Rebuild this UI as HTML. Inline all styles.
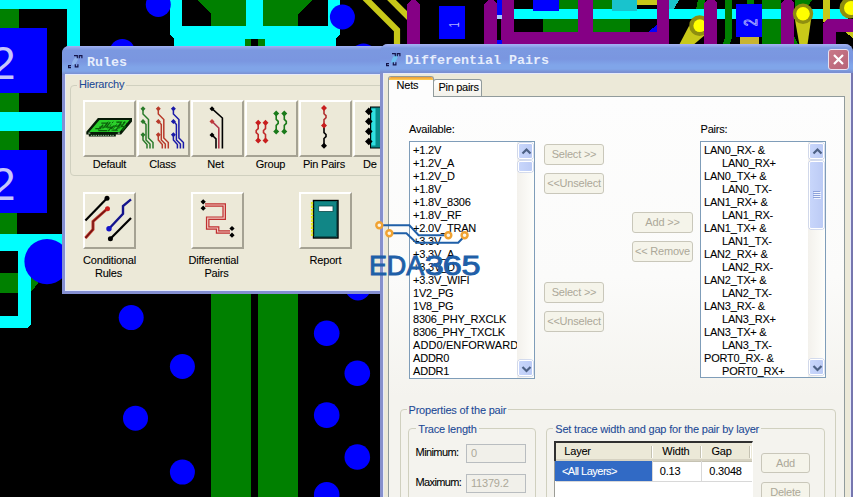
<!DOCTYPE html>
<html><head><meta charset="utf-8">
<style>
*{box-sizing:border-box;margin:0;padding:0}
html,body{width:853px;height:497px;overflow:hidden;background:#000}
body{position:relative;font-family:"Liberation Sans",sans-serif;font-size:11px;color:#000;letter-spacing:-0.2px;-webkit-text-stroke:.08px}
.abs{position:absolute}
#bg{position:absolute;left:0;top:0}
.win{position:absolute;background:#ece9d8}
.title{position:absolute;left:0;top:0;right:0;font-family:"Liberation Mono",monospace;font-weight:bold;font-size:13.33px;color:#e6edfc;white-space:pre;letter-spacing:0;-webkit-text-stroke:0}
.t{position:absolute;white-space:pre;line-height:13px}
.blue{color:#1d4a96}
.c{text-align:center}
.gb{position:absolute;border:1px solid #d0d0bf;border-radius:4px}
.btn3{position:absolute;width:53px;height:57px;background:#ece9d8;border-style:solid;border-width:2px;border-color:#fff #a5a293 #a5a293 #fff}
.lb{position:absolute;background:#fff;border:1px solid #7f9db9;overflow:hidden}
.li{position:absolute;left:4px;white-space:pre;line-height:13px}
.dbtn{position:absolute;height:21px;border:1px solid #c9c7ba;border-radius:3px;background:#f5f4ea;color:#aca899;text-align:center;line-height:19px;white-space:pre;-webkit-text-stroke:0}
.sb{position:absolute;width:17px;background:linear-gradient(to right,#f3f1ec,#fefefb)}
.sbb{position:absolute;width:15px;height:16px;border:1px solid #fff;border-radius:2px;background:linear-gradient(to right,#c8d6fb,#bccbf5);box-shadow:0 0 0 .5px #b0bfe8}
.inp{position:absolute;width:60px;height:19px;border:1px solid #b9bdc0;background:#f1f0ea;color:#aca899;padding-left:4px;line-height:17px;-webkit-text-stroke:0}
</style></head><body>
<svg id="bg" width="853" height="497" viewBox="0 0 853 497" shape-rendering="crispEdges">
<rect width="853" height="497" fill="#000"/>
<!-- left column -->
<g fill="#00ffff">
<rect x="0" y="0" width="80" height="9"/>
<rect x="67" y="0" width="13" height="50"/>
<rect x="0" y="112" width="66" height="19"/>
<rect x="0" y="234" width="66" height="17"/>
<polygon points="18,234 31,234 31,324 27,328 0,328 0,316 18,316"/>
</g>
<g fill="#008000">
<rect x="0" y="9" width="19" height="19"/>
<rect x="0" y="93" width="19" height="19"/>
<rect x="0" y="131" width="19" height="19"/>
<rect x="0" y="213" width="17" height="21"/>
<rect x="0" y="273" width="18" height="20"/>
<polygon points="31,278 42,278 31,292"/>
</g>
<g fill="#0000ff">
<rect x="0" y="28" width="47" height="65"/>
<rect x="0" y="150" width="47" height="63"/>
</g>
<text x="-9.700" y="78.7" font-family="Liberation Sans, sans-serif" font-size="45.5" fill="#c6c6fa" shape-rendering="auto">2</text>
<text x="-9.700" y="200" font-family="Liberation Sans, sans-serif" font-size="45.5" fill="#c6c6fa" shape-rendering="auto">2</text>
<!-- top middle -->
<g fill="#008000">
<polygon points="198,0 246,0 246,26 211,26 211,14"/>
<polygon points="263,0 312,0 298,14 298,26 263,26"/>
</g>
<g fill="#00ffff">
<polygon points="170,0 182,0 182,26 246,26 246,0 263,0 263,26 328,26 328,0 340,0 340,34 336,38 336,50 174,50 174,39 170,35"/>
</g>
<rect x="245" y="39" width="20" height="11" fill="#008000"/>
<rect x="251" y="39" width="7" height="11" fill="#000"/>
<!-- big green bars -->
<rect x="211" y="290" width="40" height="210" fill="#008000"/>
<rect x="258" y="290" width="40" height="210" fill="#008000"/>
<rect x="211" y="294" width="3" height="210" fill="#008000"/>
<!-- vias -->
<g fill="#0000ff" shape-rendering="auto">
<circle cx="47" cy="261.6" r="22.6"/>
<circle cx="158.3" cy="4.5" r="12.5"/>
<circle cx="122.3" cy="51.4" r="12.5"/>
<circle cx="342.4" cy="17" r="12.5"/>
<circle cx="363.5" cy="56" r="12.5"/>
<circle cx="131.2" cy="317.6" r="12.5"/>
<circle cx="182.4" cy="366.5" r="12.5"/>
<circle cx="135.5" cy="418.2" r="12.5"/>
<circle cx="182.4" cy="472.1" r="12.5"/>
<circle cx="358" cy="288" r="12.5"/>
<circle cx="326.7" cy="333.2" r="12.8"/>
<circle cx="357.3" cy="373.3" r="12.8"/>
<circle cx="326.7" cy="415.1" r="12.8"/>
<circle cx="357.3" cy="457" r="12.8"/>
<circle cx="326.7" cy="494.7" r="12.8"/>
</g>
<!-- yellow traces -->
<g fill="none" stroke="#c8c819" stroke-width="6.2" shape-rendering="auto">
<path d="M363,-4 L397,30 L397,48"/>
<path d="M387.5,-4 L412,20.5"/>
</g>
<!-- purple -->
<g fill="#850085">
<polygon points="407,5 411,0 416,0 420,5 420,48 407,48"/>
<polygon points="484,4 488,0 494,0 497,4 497,48 484,48"/>
<rect x="501" y="0" width="13" height="48"/>
<rect x="501" y="32" width="168" height="16"/>
<rect x="578" y="0" width="15" height="40"/>
<polygon points="657,0 669,0 669,40 665,44 657,44"/>
<polygon points="704,3 707,0 714,0 717,3 717,48 704,48"/>
</g>
<rect x="497" y="0" width="4.5" height="15" fill="#0000ff"/>
<rect x="497" y="15" width="4.5" height="4" fill="#9fc8ff"/>
<rect x="497" y="40" width="4.5" height="6" fill="#0000ff"/>
<!-- blue pad 1 -->
<rect x="439" y="5.5" width="26" height="33.5" fill="#0000ff"/>
<text transform="translate(458.5,27.5) rotate(-90) scale(.62,1)" font-family="Liberation Sans, sans-serif" font-size="15.5" fill="#b0b0ff" shape-rendering="auto" style="letter-spacing:0">1</text>
<!-- inside purple box -->
<rect x="533" y="0" width="26" height="10.7" fill="#0000ff"/>
<rect x="559" y="0" width="19" height="9" fill="#008000"/>
<rect x="543" y="19" width="35" height="13" fill="#008000"/>
<rect x="593" y="0" width="19" height="9" fill="#008000"/>
<rect x="593" y="19" width="37" height="13" fill="#008000"/>
<rect x="637" y="0" width="20" height="5" fill="#c8c819"/>
<polygon points="648,32 657,25 657,32" fill="#0000ff"/>
<rect x="514" y="9" width="64" height="10" fill="#00ffff"/>
<rect x="593" y="9" width="64" height="10" fill="#00ffff"/>
<rect x="533" y="0" width="26" height="10.7" fill="#0000ff"/>
<rect x="612" y="0" width="25" height="10.7" fill="#19c3cd"/>
<!-- right part -->
<polygon points="669,0 679,0 674,9 669,9" fill="#19c3cd"/>
<polygon points="698,0 705,0 704,9 696,9" fill="#008000"/>
<rect x="669" y="9" width="35" height="10" fill="#00ffff"/>
<rect x="717" y="9" width="19" height="10" fill="#00ffff"/>
<polygon points="725,0 732,0 732,38 728,48 721,48 725,38" fill="#008000"/>
<rect x="717" y="9" width="19" height="10" fill="#00ffff" opacity="0"/>
<rect x="746.5" y="0" width="7" height="4" fill="#008000"/>
<!-- teardrop 1 -->
<g shape-rendering="auto">
<polygon points="689,26 678.5,46 692,46 705,35" fill="#c8c819"/>
<circle cx="699.6" cy="25.7" r="10.4" fill="#8e8e10"/>
<circle cx="699.8" cy="25.7" r="6.4" fill="#ffff00"/>
</g>
<polygon points="704,3 707,0 714,0 717,3 717,48 704,48" fill="#850085"/>
<!-- blue pad 2 -->
<rect x="736" y="3.8" width="25.7" height="33.2" fill="#0000ff"/>
<text transform="translate(757.3,26) rotate(-90) scale(.7,1)" font-family="Liberation Sans, sans-serif" font-size="18" fill="none" stroke="#b4b4ff" stroke-width=".9" shape-rendering="auto" style="letter-spacing:0">2</text>
<rect x="740.3" y="37" width="18.7" height="11" fill="#c8b432"/>
<!-- far right -->
<rect x="762" y="0" width="19" height="48" fill="#008000"/>
<polygon points="795,0 812,0 805,10 795,20" fill="#008000"/>
<rect x="762" y="9" width="86" height="10" fill="#00ffff"/>
<polygon points="781,3 784,0 791,0 794,3 794,48 781,48" fill="#850085"/>
<polygon points="794,36 800,48 794,48" fill="#008000"/>
<rect x="823" y="0" width="7" height="22" fill="#c8c819"/>
<polygon points="827,19 853,19 853,32 836,32 836,48 823,48 823,23" fill="#850085"/>
<polygon points="845,32 853,32 853,38" fill="#c8c819"/>
<g shape-rendering="auto">
<polygon points="795,20 800,48 807,48 811,20" fill="#c8c819"/>
<circle cx="803" cy="13.8" r="10.2" fill="#8e8e10"/>
<circle cx="803" cy="13.8" r="6.8" fill="#ffff00"/>
<circle cx="850" cy="8" r="10.5" fill="#8e8e10"/>
<circle cx="851" cy="8" r="7" fill="#ffff00"/>
</g>
</svg>
<div id="rules" class="win" style="left:62px;top:46px;width:330px;height:248px;background:#848fd2;border-radius:7px 7px 0 0"></div>
<div class="abs" style="left:62px;top:46px;width:330px;height:29px;border-radius:7px 7px 0 0;background:linear-gradient(to bottom,#a3b2f3 0,#8ba3e8 2px,#7b98e0 4px,#7a96e0 15px,#80a4e8 21px,#80a4e8 25px,#7a90d2 28px,#7a90d2 29px)"></div>
<div class="abs" style="left:65px;top:74px;width:330px;height:217px;background:#e6eafb"></div>
<div class="abs" style="left:66px;top:75px;width:330px;height:215px;background:#ece9d8"></div>
<svg class="abs" style="left:66px;top:52px" width="18" height="18" viewBox="66 52 18 18"><ellipse cx="75" cy="61" rx="2" ry="4.5" fill="#a4ccf6" opacity=".55" transform="rotate(30 75 61)"/><path d="M74,55.700 H77.300 V58.200 M79.300,58.200 V55.700 H81.900 V58.200 M71,65.600 H68.600 V67.600 H71 M75.300,64.200 V66.900 H77.900 V64.200" fill="none" stroke="#15154a" stroke-width="1.200"/></svg>
<div class="title" style="left:87px;top:55px;right:auto">Rules</div>
<div class="gb" style="left:70px;top:85px;width:330px;height:91px"></div>
<div class="t blue" style="left:77px;top:78px;background:#ece9d8;padding:0 2px">Hierarchy</div>
<div class="btn3" style="left:83px;top:100px"></div>
<div class="btn3" style="left:137px;top:100px"></div>
<div class="btn3" style="left:191px;top:100px"></div>
<div class="btn3" style="left:245px;top:100px"></div>
<div class="btn3" style="left:299px;top:100px"></div>
<div class="btn3" style="left:353px;top:100px"></div>
<div class="t c" style="left:83px;top:158px;width:53px">Default</div>
<div class="t c" style="left:136px;top:158px;width:53px">Class</div>
<div class="t c" style="left:189px;top:158px;width:53px">Net</div>
<div class="t c" style="left:244px;top:158px;width:53px">Group</div>
<div class="t c" style="left:294px;top:158px;width:60px">Pin Pairs</div>
<div class="t" style="left:363px;top:158px;width:14px;overflow:hidden">Decal</div>
<div class="btn3" style="left:83px;top:192px"></div>
<div class="btn3" style="left:191px;top:192px"></div>
<div class="btn3" style="left:299px;top:192px"></div>
<div class="t c" style="left:79px;top:254px;width:61px">Conditional</div>
<div class="t c" style="left:78px;top:267px;width:61px">Rules</div>
<div class="t c" style="left:183px;top:254px;width:61px">Differential</div>
<div class="t c" style="left:186px;top:267px;width:61px">Pairs</div>
<div class="t c" style="left:299px;top:254px;width:53px">Report</div>
<svg id="icons" class="abs" style="left:62px;top:46px" width="330" height="248" viewBox="62 46 330 248">
<g transform="translate(0.3 0.6)">
<polygon points="97.600,117.500 131.700,117.500 131.700,120.800 120.800,133.800 115.500,133.800 115.500,135.800 88.500,135.800 88.500,133.800 86,133.800 86,131.200" fill="#071a07"/>
<polygon points="99.200,119.400 129.300,119.400 119.200,131.300 88.800,131.300" fill="#2bd02b"/>
<path d="M101,122.500 h6 l-3,4 h-5 M110,121.500 l-4,5 h5 l-3,4 M116,121.500 h5 l-3,4 h-5 l-2,3 M125,121 l-4,5 h4 l-3,4 M95,128 h6 M98,130 h9 M112,129.500 h5 M103,124 l-5,5 M121,123 l-6,7" fill="none" stroke="#0b5f0b" stroke-width="1.300"/>
<path d="M90.500,134.800 H114" stroke="#9fd49f" stroke-width=".9" stroke-dasharray="1.400 1"/>
<path d="M88,132.500 h2 M117.500,132.500 h2" stroke="#bfe8bf" stroke-width="1"/>
<path d="M108,121 l-7,9 M113,121 l-7,9 M118.500,121 l-7,9 M124,121 l-7,9 M127,122 l-6,8" fill="none" stroke="#0b5f0b" stroke-width="1" stroke-dasharray="2 1.500"/>
</g>
<g fill="none" stroke="#2a7a2a" stroke-width="1.5"><path d="M143,108 V114 L148.5,119.5 V138 L153,142.5 V148.5"/><path d="M143,121 L146,124.5 V140 L150,144 V148.5"/><path d="M143,135 V140 L147,144.5 V148.5"/></g><path d="M143,106.2 l2.5,2.5 -2.5,2.5 -2.5,-2.5z M143,118.9 l2.5,2.5 -2.5,2.5 -2.5,-2.5z M143,132.3 l2.5,2.5 -2.5,2.5 -2.5,-2.5z" fill="#2a7a2a"/>
<g fill="none" stroke="#b83a2a" stroke-width="1.5"><path d="M158.3,108 V114 L163.8,119.5 V138 L168.3,142.5 V148.5"/><path d="M158.3,121 L161.3,124.5 V140 L165.3,144 V148.5"/><path d="M158.3,135 V140 L162.3,144.5 V148.5"/></g><path d="M158.3,106.2 l2.5,2.5 -2.5,2.5 -2.5,-2.5z M158.3,118.9 l2.5,2.5 -2.5,2.5 -2.5,-2.5z M158.3,132.3 l2.5,2.5 -2.5,2.5 -2.5,-2.5z" fill="#b83a2a"/>
<g fill="none" stroke="#1a1aa8" stroke-width="1.5"><path d="M173.4,108 V114 L178.9,119.5 V138 L183.4,142.5 V148.5"/><path d="M173.4,121 L176.4,124.5 V140 L180.4,144 V148.5"/><path d="M173.4,135 V140 L177.4,144.5 V148.5"/></g><path d="M173.4,106.2 l2.5,2.5 -2.5,2.5 -2.5,-2.5z M173.4,118.9 l2.5,2.5 -2.5,2.5 -2.5,-2.5z M173.4,132.3 l2.5,2.5 -2.5,2.5 -2.5,-2.5z" fill="#1a1aa8"/>
<g fill="none" stroke-width="1.6"><path d="M212,108.700 L222.400,118 V148.500" stroke="#000"/><path d="M212,121.400 L218.800,128 V148.500" stroke="#b0384a"/><path d="M212,135 L216,138.800 V148.500" stroke="#000"/></g>
<path d="M212,106.2 l2.5,2.5 -2.5,2.5 -2.5,-2.5z M212,132.5 l2.5,2.5 -2.5,2.5 -2.5,-2.5z" fill="#000"/><path d="M212,118.9 l2.5,2.5 -2.5,2.5 -2.5,-2.5z" fill="#c03a3a"/>
<path d="M258.2,122.7 V128.55 L256.2,130.55 V132.55 L258.2,134.55 V140.4" fill="none" stroke="#c02a2a" stroke-width="1.6"/>
<path d="M258.2,119.7 l3,3 -3,3 -3,-3z M258.2,137.4 l3,3 -3,3 -3,-3z" fill="#c81e1e"/>
<path d="M265.5,122.7 V128.55 L263.5,130.55 V132.55 L265.5,134.55 V140.4" fill="none" stroke="#c02a2a" stroke-width="1.6"/>
<path d="M265.5,119.7 l3,3 -3,3 -3,-3z M265.5,137.4 l3,3 -3,3 -3,-3z" fill="#c81e1e"/>
<path d="M276.2,113.4 V119.4 L278.2,121.4 V123.4 L276.2,125.4 V131.4" fill="none" stroke="#1a7a1a" stroke-width="1.6"/>
<path d="M276.2,110.4 l3,3 -3,3 -3,-3z M276.2,128.4 l3,3 -3,3 -3,-3z" fill="#1a7a1a"/>
<path d="M284.3,113.4 V119.4 L286.3,121.4 V123.4 L284.3,125.4 V131.4" fill="none" stroke="#1a7a1a" stroke-width="1.6"/>
<path d="M284.3,110.4 l3,3 -3,3 -3,-3z M284.3,128.4 l3,3 -3,3 -3,-3z" fill="#1a7a1a"/>
<path d="M324,108 V113.7 L326,115.7 V117.7 L324,119.7 V125.4" fill="none" stroke="#b03030" stroke-width="1.6"/>
<path d="M324,125.4 V132.55 L326,134.55 V136.55 L324,138.55 V145.7" fill="none" stroke="#000" stroke-width="1.6"/>
<path d="M324,105 l3,3 -3,3 -3,-3z M324,122.4 l3,3 -3,3 -3,-3z" fill="#c81e1e"/><path d="M324,142.7 l3,3 -3,3 -3,-3z" fill="#000"/>
<rect x="370.500" y="107" width="12" height="41" fill="#0a8a8a" stroke="#000" stroke-width="1"/>
<rect x="371.500" y="108.500" width="4" height="37" fill="#30e0e0"/>
<path d="M368.8,107.60000000000001 l3.8,3.8 -3.8,3.8 -3.8,-3.8z M368.8,117.60000000000001 l3.8,3.8 -3.8,3.8 -3.8,-3.8z M368.8,127.60000000000001 l3.8,3.8 -3.8,3.8 -3.8,-3.8z M368.8,137.7 l3.8,3.8 -3.8,3.8 -3.8,-3.8z" fill="#000"/>
<g fill="none" stroke-linecap="butt"><path d="M85.400,220.400 L107,198.300" stroke="#000" stroke-width="2.200"/><path d="M85.400,238 L93,229.500 V221.500 L107,209" stroke="#c0392b" stroke-width="3"/><path d="M85.400,238 L93,229.500 V221.500 L107,209" stroke="#6a1010" stroke-width="1.2"/><path d="M109,228.800 L123,213.800 V206 L131,199.400" stroke="#14148c" stroke-width="2.400"/><path d="M110.400,238.800 L131,218" stroke="#000" stroke-width="2.200"/></g>
<circle cx="107" cy="198.300" r="2.500" fill="#000"/><circle cx="107.500" cy="208.800" r="2.500" fill="#c81e1e"/><circle cx="109" cy="228.800" r="2.700" fill="#1414c8"/><circle cx="110.400" cy="238.800" r="2.500" fill="#000"/>
<path d="M205,205 H224.200 V218.200 H207.700 V228 H217.600 V232 H230" fill="none" stroke="#c03030" stroke-width="3.6"/><path d="M205,205 H224.200 V218.200 H207.700 V228 H217.600 V232 H230" fill="none" stroke="#f0c8c0" stroke-width="1.2"/>
<path d="M203.2,199.20000000000002 l2.6,2.6 -2.6,2.6 -2.6,-2.6z M203.2,205.6 l2.6,2.6 -2.6,2.6 -2.6,-2.6z M232,225.9 l2.6,2.6 -2.6,2.6 -2.6,-2.6z M232,232.6 l2.6,2.6 -2.6,2.6 -2.6,-2.6z" fill="#000"/>
<rect x="313.500" y="200.500" width="24.500" height="37.500" fill="#118686" stroke="#000" stroke-width="1.4"/>
<path d="M312,202 V237" stroke="#dce61e" stroke-width="2.200" stroke-dasharray="2.400 1.100"/>
<rect x="318.700" y="206" width="14.300" height="5.500" fill="#fff" stroke="#0a4a4a" stroke-width=".8"/>
<path d="M336.500,202 V236.500 H315" stroke="#0a5a5a" stroke-width="1" fill="none"/>
</svg>
<div class="abs" style="left:380px;top:44px;width:473px;height:460px;background:linear-gradient(to right,#8690cc 0,#8690cc 460px,#7676ae 472px);border-radius:8px 8px 0 0"></div>
<div class="abs" style="left:380px;top:44px;width:473px;height:29px;border-radius:8px 8px 0 0;background:linear-gradient(to bottom,#a6b3f5 0,#93a8ec 2px,#7b99e1 4px,#7a96e0 15px,#80a5e9 21px,#80a5e9 25px,#7a90d2 28px,#7a8fd0 29px)"></div>
<div class="abs" style="left:383px;top:72.500px;width:468px;height:430px;background:#e6eafb"></div><div class="abs" style="left:384px;top:73.500px;width:466px;height:430px;background:#ece9d8"></div>
<svg class="abs" style="left:384px;top:50px" width="18" height="18" viewBox="66 52 18 18"><ellipse cx="76.500" cy="61" rx="2.200" ry="4.800" fill="#6ccaf4" opacity=".8" transform="rotate(30 76.500 61)"/><path d="M74,55.700 H77.300 V58.200 M79.300,58.200 V55.700 H81.900 V58.200 M71,65.600 H68.600 V67.600 H71 M75.300,64.200 V66.900 H77.900 V64.200" fill="none" stroke="#15154a" stroke-width="1.200"/></svg>
<div class="title" style="left:405px;top:53px;right:auto">Differential Pairs</div>
<div class="abs" style="left:828px;top:49px;width:21px;height:21px;border:1px solid #e8e0f0;border-radius:3px;background:linear-gradient(135deg,#c87888,#b86478)"><svg width="19" height="19" viewBox="0 0 19 19"><path d="M5,5 L14,14 M14,5 L5,14" stroke="#fff" stroke-width="2.200" fill="none"/></svg></div>
<div class="abs" style="left:388px;top:96px;width:457px;height:410px;border:1px solid #919b9c;background:linear-gradient(to bottom,#fdfdfd 0,#fbfbfa 180px,#f4f3ee 300px)"></div>
<div class="abs" style="left:433px;top:79px;width:49px;height:17px;border:1px solid #919b9c;border-bottom:none;border-radius:3px 3px 0 0;background:linear-gradient(to bottom,#fff,#f2f1ea)"></div>
<div class="abs" style="left:388px;top:76px;width:46px;height:21px;border:1px solid #919b9c;border-bottom:none;border-radius:3px 3px 0 0;background:#fdfdfd;overflow:hidden"><div style="height:2.500px;background:linear-gradient(to bottom,#eb9a34,#ffcf52)"></div></div>
<div class="t " style="left:396.5px;top:79.3px;">Nets</div>
<div class="t " style="left:438.5px;top:81.1px;letter-spacing:-0.3px">Pin pairs</div>
<div class="t " style="left:409px;top:122.6px;">Available:</div>
<div class="t " style="left:700.5px;top:122.6px;">Pairs:</div>
<div class="lb" style="left:409px;top:141px;width:126px;height:238px">
<div class="li" style="left:3px;top:1.5px">+1.2V</div>
<div class="li" style="left:3px;top:14.5px">+1.2V_A</div>
<div class="li" style="left:3px;top:27.5px">+1.2V_D</div>
<div class="li" style="left:3px;top:40.5px">+1.8V</div>
<div class="li" style="left:3px;top:53.5px">+1.8V_8306</div>
<div class="li" style="left:3px;top:66.5px">+1.8V_RF</div>
<div class="li" style="left:3px;top:79.5px">+2.0V_TRAN</div>
<div class="li" style="left:3px;top:92.5px">+3.3V</div>
<div class="li" style="left:3px;top:105.5px">+3.3V_A</div>
<div class="li" style="left:3px;top:118.5px">+3.3V_D</div>
<div class="li" style="left:3px;top:131.5px">+3.3V_WIFI</div>
<div class="li" style="left:3px;top:144.5px">1V2_PG</div>
<div class="li" style="left:3px;top:157.5px">1V8_PG</div>
<div class="li" style="left:3px;top:170.5px">8306_PHY_RXCLK</div>
<div class="li" style="left:3px;top:183.5px">8306_PHY_TXCLK</div>
<div class="li" style="left:3px;top:196.5px;letter-spacing:.1px">ADD0/ENFORWARD</div>
<div class="li" style="left:3px;top:209.5px">ADDR0</div>
<div class="li" style="left:3px;top:222.5px">ADDR1</div>
<div class="sb" style="left:107px;top:0;height:236px"></div>
<div class="sbb" style="left:108px;top:1px"><svg width="15" height="16" viewBox="0 0 15 16"><path d="M3.5,9.500 L7.500,5.500 L11.500,9.500" fill="none" stroke="#4d6185" stroke-width="2.200"/></svg></div>
<div class="sbb" style="left:108px;top:218px"><svg width="15" height="16" viewBox="0 0 15 16"><path d="M3.5,6 L7.500,10 L11.500,6" fill="none" stroke="#4d6185" stroke-width="2.200"/></svg></div>
<div class="sbb" style="left:108px;top:18.5px;height:11px"></div>
</div>
<div class="lb" style="left:700px;top:141px;width:126px;height:237px">
<div class="li" style="left:3px;top:1.5px">LAN0_RX- &amp;</div>
<div class="li" style="left:21px;top:14.5px">LAN0_RX+</div>
<div class="li" style="left:3px;top:27.5px">LAN0_TX+ &amp;</div>
<div class="li" style="left:21px;top:40.5px">LAN0_TX-</div>
<div class="li" style="left:3px;top:53.5px">LAN1_RX+ &amp;</div>
<div class="li" style="left:21px;top:66.5px">LAN1_RX-</div>
<div class="li" style="left:3px;top:79.5px">LAN1_TX+ &amp;</div>
<div class="li" style="left:21px;top:92.5px">LAN1_TX-</div>
<div class="li" style="left:3px;top:105.5px">LAN2_RX+ &amp;</div>
<div class="li" style="left:21px;top:118.5px">LAN2_RX-</div>
<div class="li" style="left:3px;top:131.5px">LAN2_TX+ &amp;</div>
<div class="li" style="left:21px;top:144.5px">LAN2_TX-</div>
<div class="li" style="left:3px;top:157.5px">LAN3_RX- &amp;</div>
<div class="li" style="left:21px;top:170.5px">LAN3_RX+</div>
<div class="li" style="left:3px;top:183.5px">LAN3_TX+ &amp;</div>
<div class="li" style="left:21px;top:196.5px">LAN3_TX-</div>
<div class="li" style="left:3px;top:209.5px">PORT0_RX- &amp;</div>
<div class="li" style="left:21px;top:222.5px">PORT0_RX+</div>
<div class="sb" style="left:107px;top:0;height:235px"></div>
<div class="sbb" style="left:108px;top:1px"><svg width="15" height="16" viewBox="0 0 15 16"><path d="M3.5,9.500 L7.500,5.500 L11.500,9.500" fill="none" stroke="#4d6185" stroke-width="2.200"/></svg></div>
<div class="sbb" style="left:108px;top:217px"><svg width="15" height="16" viewBox="0 0 15 16"><path d="M3.5,6 L7.500,10 L11.500,6" fill="none" stroke="#4d6185" stroke-width="2.200"/></svg></div>
<div class="sbb" style="left:108px;top:18.5px;height:68px"><svg width="15" height="68" style="position:absolute;left:-1px;top:-1px"><path d="M4,30.5 h7 M4,32.5 h7 M4,34.5 h7 M4,36.5 h7" stroke="#8da2da" stroke-width="1"/><path d="M5,31.5 h7 M5,33.5 h7 M5,35.5 h7 M5,37.5 h7" stroke="#f0f4fe" stroke-width="1"/></svg></div>
</div>
<div class="dbtn" style="left:544px;top:144px;width:60px;height:21px;line-height:19px;">Select &gt;&gt;</div>
<div class="dbtn" style="left:544px;top:173px;width:60px;height:21px;line-height:19px;">&lt;&lt;Unselect</div>
<div class="dbtn" style="left:544px;top:282px;width:60px;height:21px;line-height:19px;">Select &gt;&gt;</div>
<div class="dbtn" style="left:544px;top:311px;width:60px;height:21px;line-height:19px;">&lt;&lt;Unselect</div>
<div class="dbtn" style="left:632px;top:212px;width:61px;height:21px;line-height:19px;">Add &gt;&gt;</div>
<div class="dbtn" style="left:632px;top:241px;width:61px;height:21px;line-height:19px;">&lt;&lt; Remove</div>
<div class="gb" style="left:400px;top:409px;width:436px;height:100px"></div>
<div class="t blue" style="left:406.5px;top:403.5px;background:#f4f3ee;padding:0 2px">Properties of the pair</div>
<div class="gb" style="left:408px;top:428px;width:128px;height:100px"></div>
<div class="t blue" style="left:416.3px;top:422.7px;background:#f4f3ee;padding:0 2px">Trace length</div>
<div class="gb" style="left:546px;top:428px;width:279px;height:100px"></div>
<div class="t blue" style="left:553.3px;top:422.7px;background:#f4f3ee;padding:0 2px">Set trace width and gap for the pair by layer</div>
<div class="t " style="left:415.6px;top:445.7px;letter-spacing:-0.6px">Minimum:</div>
<div class="t " style="left:415.6px;top:475.7px;letter-spacing:-0.65px">Maximum:</div>
<div class="inp" style="left:466px;top:444px">0</div>
<div class="inp" style="left:466px;top:474px">11379.2</div>
<div class="abs" style="left:554px;top:441px;width:199px;height:70px;background:#fff;border-style:solid;border-width:2px 1px 1px 1px;border-color:#303030 #fff #fff #9c9c96"></div>
<div class="abs" style="left:554px;top:441px;width:1.500px;height:20px;background:#303030"></div>
<div class="abs" style="left:555.500px;top:443px;width:196.500px;height:18px;background:#ece9d8;border-bottom:2px solid #d6d2c2;box-shadow:0 1px 0 #c5c2b2"></div>
<div class="abs" style="left:651px;top:446px;width:2px;height:12px;background:linear-gradient(to right,#c5c2b2 50%,#fff 50%)"></div>
<div class="abs" style="left:700px;top:446px;width:2px;height:12px;background:linear-gradient(to right,#c5c2b2 50%,#fff 50%)"></div>
<div class="abs" style="left:749px;top:446px;width:2px;height:12px;background:linear-gradient(to right,#c5c2b2 50%,#fff 50%)"></div>
<div class="t " style="left:564.3px;top:445.2px;">Layer</div>
<div class="t " style="left:662.3px;top:445.2px;">Width</div>
<div class="t " style="left:711.5px;top:445.2px;">Gap</div>
<div class="abs" style="left:555px;top:461px;width:97px;height:20px;background:#316ac5"></div>
<div class="abs" style="left:652px;top:461px;width:1px;height:21px;background:#d8d8d8"></div>
<div class="abs" style="left:701px;top:461px;width:1px;height:21px;background:#d8d8d8"></div>
<div class="abs" style="left:556px;top:481px;width:196px;height:1px;background:#d8d8d8"></div>
<div class="t " style="left:561.9px;top:464.8px;color:#fff;letter-spacing:-0.5px">&lt;All Layers&gt;</div>
<div class="t " style="left:659.8px;top:464.8px;">0.13</div>
<div class="t " style="left:709.3px;top:464.8px;">0.3048</div>
<div class="dbtn" style="left:761px;top:453px;width:49px;height:20px;line-height:18px;">Add</div>
<div class="dbtn" style="left:761px;top:482px;width:49px;height:20px;line-height:18px;">Delete</div>
<svg class="abs" style="left:370px;top:215px" width="130" height="70" viewBox="370 215 130 70">
<g fill="none" stroke="#1f5fa8" stroke-width="2"><path d="M383,225.200 H409.400 L418.600,235.200 H444.500"/><path d="M393,233.300 H406.400 L416.300,242.800 H458.200 L462.500,238.300"/></g>
<circle cx="379.3" cy="225.2" r="3" fill="#fdf6e4" stroke="#f0a232" stroke-width="2.400"/>
<circle cx="389.3" cy="233.3" r="3" fill="#fdf6e4" stroke="#f0a232" stroke-width="2.400"/>
<circle cx="448.3" cy="235.2" r="3" fill="#fdf6e4" stroke="#f0a232" stroke-width="2.400"/>
<circle cx="464.6" cy="235.2" r="3" fill="#fdf6e4" stroke="#f0a232" stroke-width="2.400"/>
<g font-family="Liberation Sans, sans-serif" font-size="27" fill="#1f5fa8" stroke="#1f5fa8" stroke-width=".9" style="letter-spacing:0"><text x="369.100 386.700 406.300" y="274.700">EDA</text><text transform="translate(0 274.700) scale(1.270 1)" x="334.500 348.650 363.300" y="0">365</text></g>
</svg>
</body></html>
